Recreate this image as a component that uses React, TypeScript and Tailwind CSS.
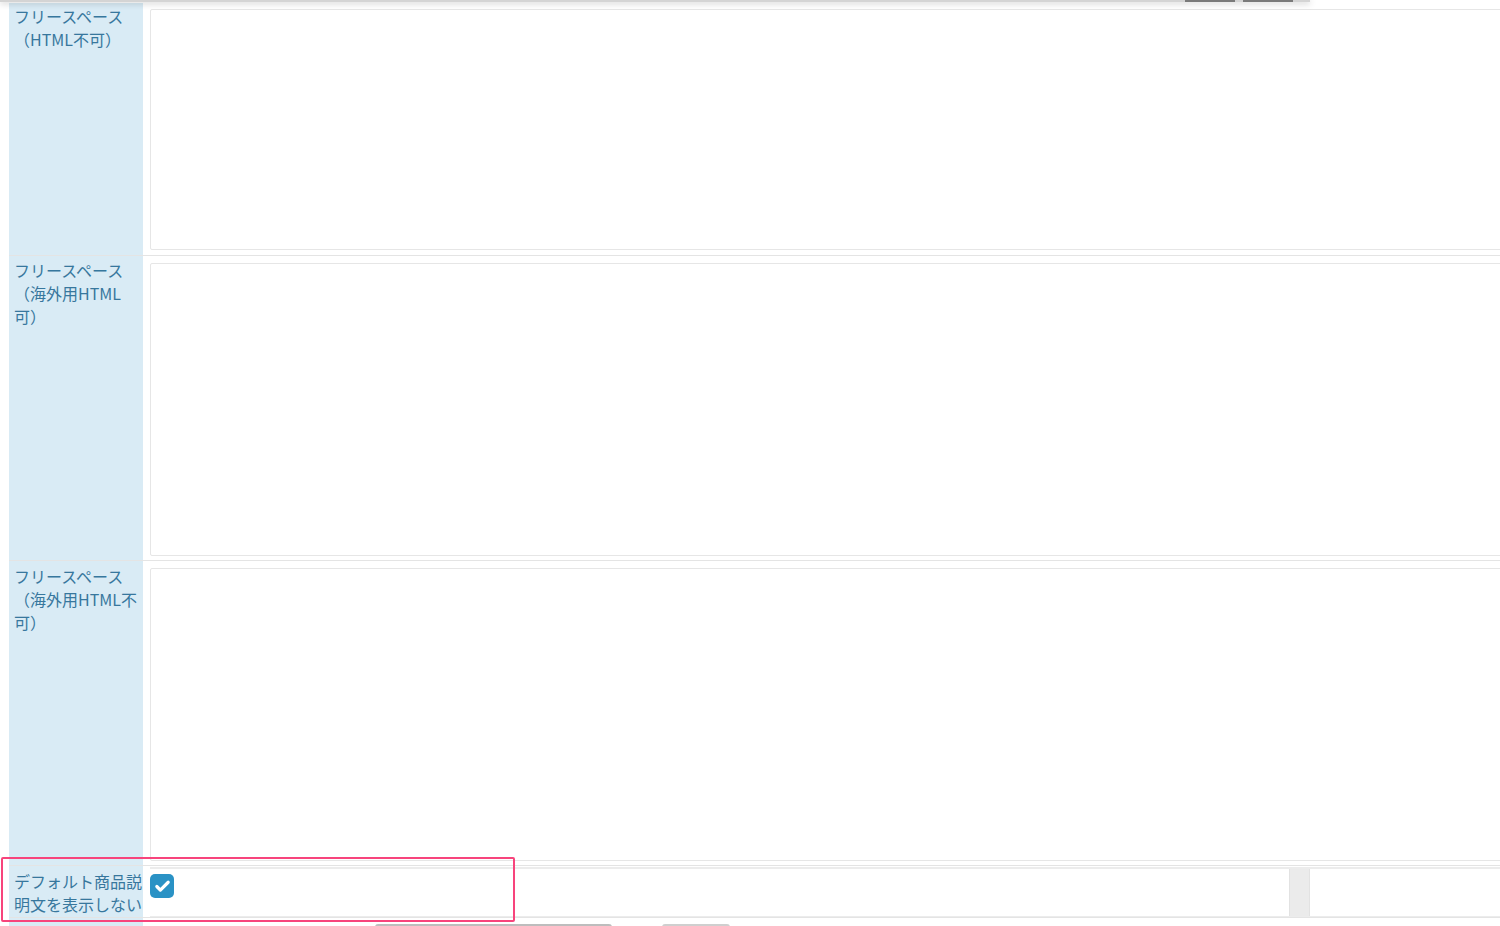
import { Check } from "lucide-react";

const rows = [
  { label: "フリースペース（HTML不可）", h: "h-[241px]", pad: "pt-[6px] pb-[5px]", lpt: "pt-[2px]" },
  { label: "フリースペース（海外用HTML可）", h: "h-[293px]", pad: "pt-[7px] pb-[4px]", lpt: "pt-[3px]" },
  { label: "フリースペース（海外用HTML不可）", h: "h-[293px]", pad: "pt-[7px] pb-[4px]", lpt: "pt-[4px]" },
];

function LabelCell({ children, pt = "pt-[4px]" }: { children: React.ReactNode; pt?: string }) {
  return (
    <div className={`w-[134px] shrink-0 bg-[#d9ebf5] pl-[5px] pr-[1px] ${pt} text-[16px] leading-[23px] text-[#37779d] break-all`}>
      {children}
    </div>
  );
}

export default function App() {
  return (
    <div
      className="relative w-[1500px] h-[926px] overflow-hidden bg-white"
      style={{ fontFamily: '"Noto Sans CJK JP", "Noto Sans", sans-serif' }}
    >
      {/* sticky header bottom edge */}
      <div className="absolute left-0 top-0 z-10 h-[2px] w-[1310px] bg-[#d4d4d4] shadow-[0_1px_6px_rgba(0,0,0,0.35)]">
        <div className="absolute left-[1185px] top-0 h-[2px] w-[50px] bg-[#7a7a7a]" />
        <div className="absolute left-[1243px] top-0 h-[2px] w-[50px] bg-[#7a7a7a]" />
      </div>

      <div className="pl-[9px] pt-[3px]">
        {rows.map((r) => (
          <div key={r.label} className="flex border-b border-[#e4e4e4]">
            <LabelCell pt={r.lpt}>{r.label}</LabelCell>
            <div className={`flex-1 pl-[7px] ${r.pad}`}>
              <div className={`${r.h} w-[1400px] rounded-[2px] border border-[#e6e6e6] bg-white`} />
            </div>
          </div>
        ))}

        {/* checkbox row */}
        <div className="flex border-b border-[#e4e4e4]">
          <LabelCell>デフォルト商品説明文を表示しない</LabelCell>
          <div className="flex-1 pl-[7px] pt-[1px]">
            <div className="flex h-[50px] border-t-2 border-b border-[#ececec]">
              <div className="w-[1139px] pt-[5px]">
                <div className="flex h-[24px] w-[24px] items-center justify-center rounded-[5px] bg-[#2a92c5]">
                  <Check size={17} strokeWidth={4.5} color="white" />
                </div>
              </div>
              <div className="w-[21px] border-x border-[#e2e2e2] bg-[#ebebeb]" />
              <div className="flex-1" />
            </div>
          </div>
        </div>

        {/* next row, cut off */}
        <div className="flex">
          <LabelCell>&nbsp;</LabelCell>
          <div className="flex-1 pt-[6px]">
            <div className="flex gap-[50px] pl-[232px]">
              <div className="h-[6px] w-[237px] rounded-t-[3px] border-t-2 border-x border-[#bdbdbd] bg-[#f4f4f4]" />
              <div className="h-[6px] w-[68px] rounded-t-[3px] border-t-2 border-x border-[#cfcfcf] bg-[#f7f7f7]" />
            </div>
          </div>
        </div>
      </div>

      {/* highlight frame */}
      <div className="absolute left-[1px] top-[857px] h-[65px] w-[514px] rounded-[2px] border-2 border-[#f7447c]" />
    </div>
  );
}
